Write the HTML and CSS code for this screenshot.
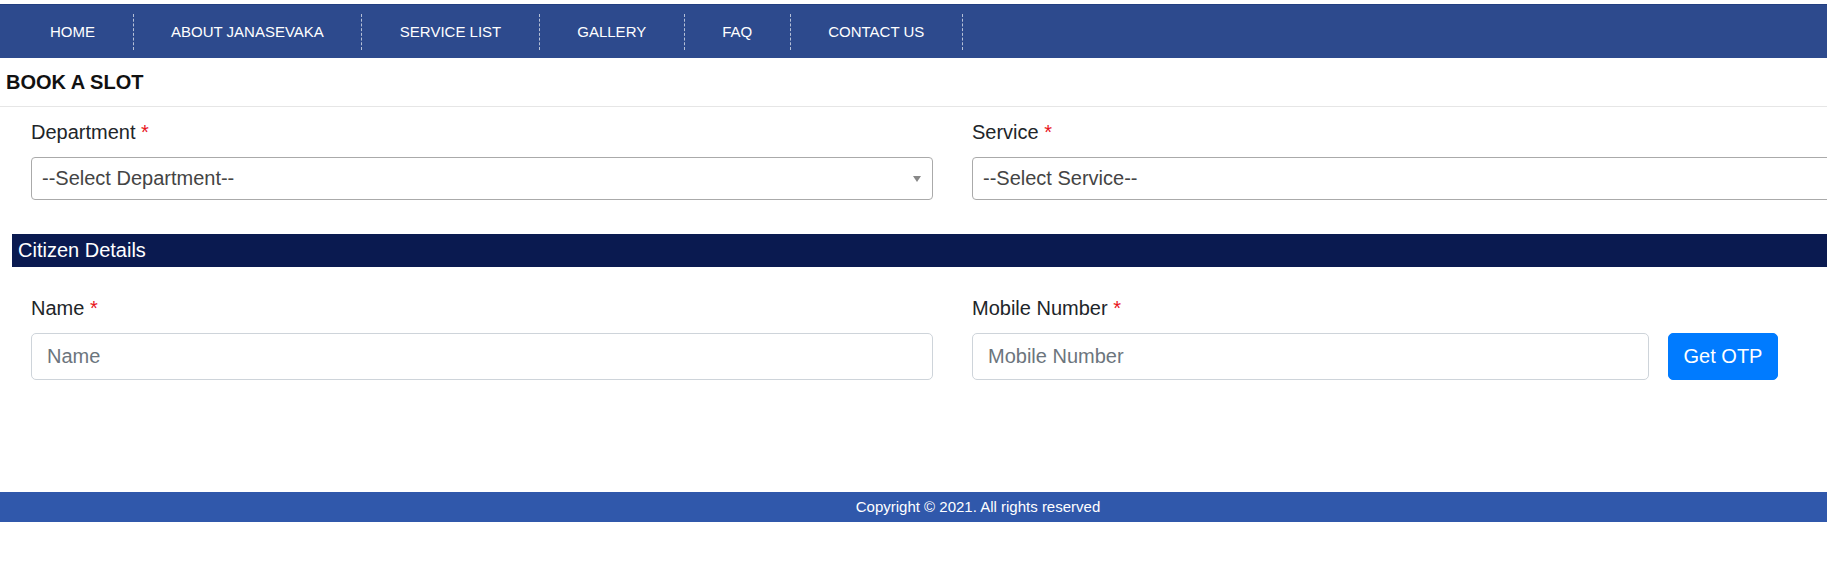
FILE: index.html
```html
<!DOCTYPE html>
<html lang="en">
<head>
<meta charset="utf-8">
<title>Book a Slot</title>
<link rel="stylesheet" href="styles.css">
</head>
<body>
<div class="page">
  <nav class="topnav">
    <ul class="menu">
      <li><a href="#">HOME</a></li>
      <li><a href="#">ABOUT JANASEVAKA</a></li>
      <li><a href="#">SERVICE LIST</a></li>
      <li><a href="#">GALLERY</a></li>
      <li><a href="#">FAQ</a></li>
      <li><a href="#">CONTACT US</a></li>
    </ul>
  </nav>

  <h2 class="page-title">BOOK A SLOT</h2>

  <div class="content">
    <div class="form-row first">
      <div class="field">
        <label class="label">Department <span class="req">*</span></label>
        <div class="select">
          <span class="select-text">--Select Department--</span>
          <span class="select-arrow"></span>
        </div>
      </div>
      <div class="field">
        <label class="label">Service <span class="req">*</span></label>
        <div class="select">
          <span class="select-text">--Select Service--</span>
          <span class="select-arrow"></span>
        </div>
      </div>
    </div>

    <div class="section-bar">Citizen Details</div>

    <div class="form-row second">
      <div class="field">
        <label class="label">Name <span class="req">*</span></label>
        <input class="input" type="text" placeholder="Name">
      </div>
      <div class="field">
        <label class="label">Mobile Number <span class="req">*</span></label>
        <div class="otp-group">
          <input class="input mobile" type="text" placeholder="Mobile Number">
          <button class="btn-otp" type="button">Get OTP</button>
        </div>
      </div>
    </div>
  </div>

  <footer class="footer">Copyright © 2021. All rights reserved</footer>
</div>
</body>
</html>
```

FILE: styles.css
```css
html, body {
  margin: 0;
  padding: 0;
  overflow: hidden;
  background: #ffffff;
}

.page {
  width: 1956px;
  font-family: "Liberation Sans", Arial, sans-serif;
  color: #212529;
}

/* ---------- top navigation ---------- */
.topnav {
  margin-top: 4px;
  height: 54px;
  background: #2d4a8d;
  border-top: 1px solid #233f80;
  box-sizing: border-box;
}

.menu {
  list-style: none;
  margin: 0;
  padding: 0 0 0 12.5px;
  height: 100%;
  display: flex;
  align-items: center;
}

.menu li a {
  display: block;
  padding: 0 37.5px;
  line-height: 36px;
  font-size: 15px;
  color: #ffffff;
  text-decoration: none;
  border-right: 1px dashed rgba(255, 255, 255, 0.65);
}

/* ---------- title ---------- */
.page-title {
  margin: 0;
  padding: 13px 6px 12px;
  font-size: 20px;
  line-height: 23px;
  font-weight: bold;
  color: #111111;
  border-bottom: 1px solid #e6e6e6;
}

/* ---------- form ---------- */
.content {
  padding-left: 12px;
}

.form-row {
  display: grid;
  grid-template-columns: 902px 902px;
  column-gap: 39px;
  padding-left: 19px;
}

.form-row.first {
  padding-top: 10px;
}

.form-row.second {
  margin-top: 26px;
}

.field {
  display: flex;
  flex-direction: column;
}

.label {
  font-size: 20px;
  line-height: 30px;
  margin-bottom: 10px;
  color: #212529;
}

.req {
  color: #e8141b;
}

.select {
  height: 43px;
  box-sizing: border-box;
  border: 1px solid #aaaaaa;
  border-radius: 4px;
  padding: 0 11px 0 10px;
  display: flex;
  align-items: center;
  justify-content: space-between;
  background: #ffffff;
}

.select-text {
  font-size: 20px;
  color: #444444;
}

.select-arrow {
  width: 0;
  height: 0;
  border-style: solid;
  border-width: 6px 4px 0 4px;
  border-color: #888888 transparent transparent transparent;
}

.section-bar {
  margin-top: 34px;
  height: 33px;
  line-height: 33px;
  padding-left: 6px;
  background: #0a1a50;
  color: #ffffff;
  font-size: 20px;
}

.input {
  height: 47px;
  box-sizing: border-box;
  border: 1px solid #ced4da;
  border-radius: 5px;
  padding: 0 15px;
  font-family: "Liberation Sans", Arial, sans-serif;
  font-size: 20px;
  color: #495057;
  background: #ffffff;
  outline: none;
}

.input::placeholder {
  color: #6c757d;
}

.otp-group {
  display: flex;
  gap: 19px;
}

.input.mobile {
  width: 677px;
}

.btn-otp {
  width: 110px;
  height: 47px;
  border: 1px solid #007bff;
  border-radius: 5px;
  background: #007bff;
  color: #ffffff;
  font-family: "Liberation Sans", Arial, sans-serif;
  font-size: 20px;
  padding: 0;
}

/* ---------- footer ---------- */
.footer {
  margin-top: 112px;
  height: 30px;
  line-height: 30px;
  background: #3058ab;
  color: #ffffff;
  font-size: 15px;
  text-align: center;
}
```
